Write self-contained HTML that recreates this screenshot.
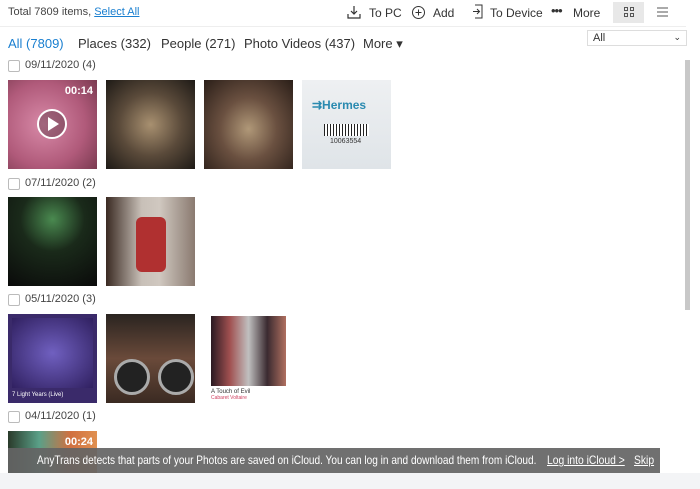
<!DOCTYPE html><html style="overflow:hidden;height:489px"><head><meta charset="utf-8"><style>
body{margin:0;width:700px;height:489px;overflow:hidden;background:#f3f4f6;font-family:"Liberation Sans",sans-serif;position:relative;color:#333}
.main{position:absolute;left:0;top:0;width:700px;height:473px;background:#fff;overflow:hidden}
.t{position:absolute;white-space:nowrap}
.cb{position:absolute;left:8px;width:10px;height:10px;border:1px solid #bbb;border-radius:2px;background:#fff}
.d{position:absolute;left:25px;font-size:11px;color:#444}
.th{position:absolute;width:89px;height:89px;overflow:hidden}
.tb{font-size:12px;color:#333}
</style></head><body><div class="main">
<div class="t" style="left:8px;top:6px;font-size:11px;color:#444">Total 7809 items, <span style="color:#1a7fd0;text-decoration:underline">Select All</span></div>
<svg style="position:absolute;left:346px;top:5px" width="16" height="14"><path d="M2 9v4h12V9M8 1v8M5 6l3 3 3-3" fill="none" stroke="#333" stroke-width="1.2"/></svg>
<div class="t tb" style="left:369px;top:6px">To PC</div>
<svg style="position:absolute;left:411px;top:5px" width="15" height="15"><circle cx="7.5" cy="7.5" r="6" fill="none" stroke="#333"/><path d="M7.5 4.5v6M4.5 7.5h6" stroke="#333"/></svg>
<div class="t tb" style="left:433px;top:6px">Add</div>
<svg style="position:absolute;left:472px;top:4px" width="12" height="15"><path d="M3 1h7v13H3M1 7.5h6M5 5l2.5 2.5L5 10" fill="none" stroke="#333"/></svg>
<div class="t tb" style="left:490px;top:6px">To Device</div>
<div class="t tb" style="left:551px;top:3px;font-size:13px;letter-spacing:-1px">•••</div>
<div class="t tb" style="left:573px;top:6px">More</div>
<div style="position:absolute;left:613px;top:2px;width:31px;height:21px;background:#e8e8e8"></div>
<svg style="position:absolute;left:624px;top:7px" width="10" height="10"><g fill="none" stroke="#555"><rect x="0.5" y="0.5" width="3" height="3"/><rect x="6.5" y="0.5" width="3" height="3"/><rect x="0.5" y="6.5" width="3" height="3"/><rect x="6.5" y="6.5" width="3" height="3"/></g></svg>
<svg style="position:absolute;left:657px;top:7px" width="11" height="10"><path d="M0 1h11M0 5h11M0 9h11" stroke="#555"/></svg>
<div style="position:absolute;left:0;top:26px;width:686px;height:1px;background:#eee"></div>
<div class="t" style="left:8px;top:36px;font-size:13px;color:#1a7fd0">All (7809)</div>
<div class="t" style="left:78px;top:36px;font-size:13px">Places (332)</div>
<div class="t" style="left:161px;top:36px;font-size:13px">People (271)</div>
<div class="t" style="left:244px;top:36px;font-size:13px">Photo Videos (437)</div>
<div class="t" style="left:363px;top:36px;font-size:13px">More ▾</div>
<div style="position:absolute;left:587px;top:30px;width:100px;height:16px;border:1px solid #ddd;font-size:11px;box-sizing:border-box;padding:1px 5px">All<span style="float:right;font-size:9px">⌄</span></div>
<div style="position:absolute;left:685px;top:60px;width:5px;height:250px;background:#c8c8c8"></div>

<div class="cb" style="top:60px"></div><div class="d t" style="top:59px">09/11/2020 (4)</div>
<div class="th" style="left:8px;top:80px;background:radial-gradient(circle at 40% 50%,#d88aa8,#b05a7a 60%,#7a3a50)"><div class="t" style="right:4px;top:5px;color:#fff;font-size:11px;font-weight:bold">00:14</div><svg style="position:absolute;left:28px;top:28px" width="32" height="32"><circle cx="16" cy="16" r="14" fill="rgba(0,0,0,.25)" stroke="#fff" stroke-width="2"/><path d="M12 9l11 7-11 7z" fill="#fff"/></svg></div>
<div class="th" style="left:106px;top:80px;background:radial-gradient(ellipse at 50% 50%,#a89070,#5a4a3a 50%,#1e1a16)"></div>
<div class="th" style="left:204px;top:80px;background:radial-gradient(ellipse at 50% 55%,#b09878,#6a5040 45%,#2a1e18)"></div>
<div class="th" style="left:302px;top:80px;background:linear-gradient(#eef0f2,#dfe4e8)"><div class="t" style="left:10px;top:18px;color:#2a8ab0;font-size:12px;font-weight:bold">⇉Hermes</div><div style="position:absolute;left:22px;top:44px;width:45px;height:12px;background:repeating-linear-gradient(90deg,#222 0 1px,#fff 1px 3px)"></div><div class="t" style="left:28px;top:58px;font-size:7px">10063554</div></div>

<div class="cb" style="top:178px"></div><div class="d t" style="top:177px">07/11/2020 (2)</div>
<div class="th" style="left:8px;top:197px;background:radial-gradient(circle at 50% 25%,#4a8a50,#1a2a1a 40%,#0a0a0a)"></div>
<div class="th" style="left:106px;top:197px;background:linear-gradient(90deg,#3a2a22,#c8c0b8 40%,#d0c8c0 60%,#8a7a70)"><div style="position:absolute;left:30px;top:20px;width:30px;height:55px;background:#b03030;border-radius:6px"></div></div>

<div class="cb" style="top:294px"></div><div class="d t" style="top:293px">05/11/2020 (3)</div>
<div class="th" style="left:8px;top:314px;background:#3a2a6a"><div style="position:absolute;left:4px;top:4px;width:81px;height:70px;background:radial-gradient(#7060c0,#302060)"></div><div class="t" style="left:4px;top:78px;color:#fff;font-size:6px">7 Light Years (Live)</div></div>
<div class="th" style="left:106px;top:314px;background:linear-gradient(#2a2420,#6a4a3a 50%,#3a2a22)"><div style="position:absolute;left:8px;top:45px;width:30px;height:30px;border-radius:50%;background:#222;border:3px solid #aaa"></div><div style="position:absolute;left:52px;top:45px;width:30px;height:30px;border-radius:50%;background:#222;border:3px solid #aaa"></div></div>
<div class="th" style="left:204px;top:314px;background:#fff"><div style="position:absolute;left:7px;top:2px;width:75px;height:70px;background:linear-gradient(90deg,#2a1a22,#a05050,#c0c0c0,#3a2a30,#b07060)"></div><div class="t" style="left:7px;top:75px;font-size:6px">A Touch of Evil</div><div class="t" style="left:7px;top:81px;font-size:5px;color:#d04060">Cabaret Voltaire</div></div>

<div class="cb" style="top:411px"></div><div class="d t" style="top:410px">04/11/2020 (1)</div>
<div style="position:absolute;left:8px;top:431px;width:89px;height:42px;overflow:hidden;background:linear-gradient(90deg,#2a3a2a,#5aa088 35%,#d07040 70%,#e09050)"><div class="t" style="right:4px;top:5px;color:#fff;font-size:11px;font-weight:bold">00:24</div></div>
<div style="position:absolute;left:8px;top:448px;width:652px;height:25px;overflow:hidden;background:rgba(100,100,100,.92);color:#fff;font-size:12px;line-height:25px">
<span class="t" style="left:29px;top:0;transform:scaleX(0.84);transform-origin:0 50%">AnyTrans detects that parts of your Photos are saved on iCloud. You can log in and download them from iCloud.</span>
<span class="t" style="left:539px;top:0;text-decoration:underline;transform:scaleX(0.86);transform-origin:0 50%">Log into iCloud &gt;</span>
<span class="t" style="left:626px;top:0;text-decoration:underline;transform:scaleX(0.86);transform-origin:0 50%">Skip</span></div>
</div></body></html>
